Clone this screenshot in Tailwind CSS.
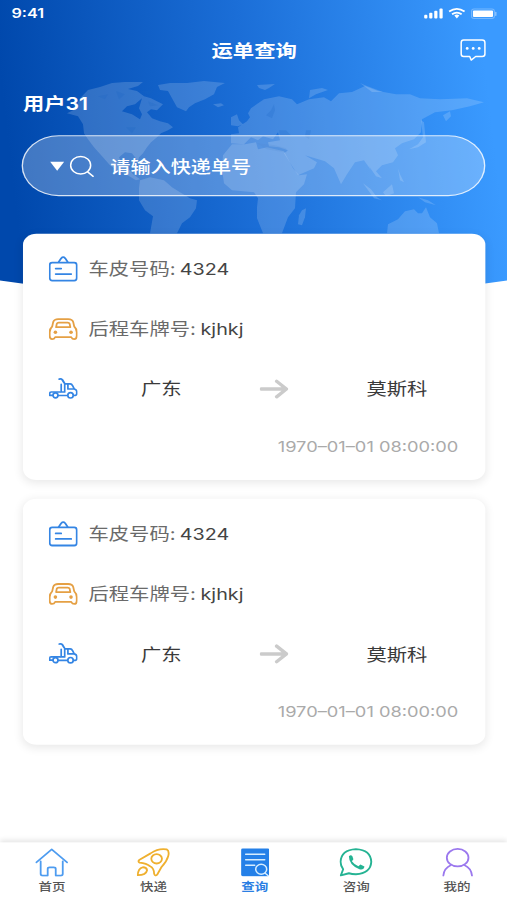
<!DOCTYPE html>
<html lang="zh-CN">
<head>
<meta charset="utf-8">
<title>运单查询</title>
<script src="https://cdn.jsdelivr.net/npm/@tailwindcss/browser@4"></script>
</head>
<body class="h-[900px] w-[507px] overflow-hidden bg-white">
<svg class="hidden">
  <symbol id="tag" viewBox="0 0 29 26" preserveAspectRatio="none"><g fill="none" stroke="#3485e4" stroke-width="1.800" stroke-linecap="round" stroke-linejoin="round"><rect x="1" y="6.500" width="27" height="18" rx="2.500"/><path d="M10 6 12.500 2.300Q14.500 0 16.500 2.300L19 6M7 12.500h5.500M7 18h15.500"/></g></symbol>
  <symbol id="car" viewBox="0 0 29 22" preserveAspectRatio="none"><g fill="none" stroke="#e5a044" stroke-width="1.800" stroke-linejoin="round"><path d="M9.500 1H19.500Q23.500 1 24.500 4L25.500 8.300Q28 10.500 28 14V17.500Q28 20.800 25.500 20.800 23.500 20.800 22.500 18.800H6.500Q5.500 20.800 3.500 20.800 1 20.800 1 17.500V14Q1 10.500 3.500 8.300L4.500 4Q5.500 1 9.500 1Z"/><path d="M10 4.500H19Q20.500 4.500 20.900 5.600L21.600 9H7.400L8.100 5.600Q8.500 4.500 10 4.500Z"/></g><circle cx="6.700" cy="14" r="1.800" fill="#e5a044"/><circle cx="22.300" cy="14" r="1.800" fill="#e5a044"/></symbol>
  <symbol id="truck" viewBox="0 0 29 21" preserveAspectRatio="none"><g fill="none" stroke="#3485e4" stroke-width="1.700" stroke-linecap="round" stroke-linejoin="round"><path d="M10.500 1.200Q12.500 .6 13.800 1.800L16 5.500V14H12.500V6.500M13.500 2 15.500 5"/><path d="M16.500 6H21.500Q23 6 24 8L25.500 11Q28 11.800 28 13.500V16Q28 17.500 25 17.500M19.200 6.500V11H25M11.500 14H2.500Q1 14 1 15.500V17.300H4M9.500 17.500H18.500"/><circle cx="6.800" cy="17.300" r="2.500"/><circle cx="21.800" cy="17.300" r="2.700"/></g></symbol>
  <symbol id="arrow" viewBox="0 0 29 20" preserveAspectRatio="none"><path d="M1.500 10H26M17 2.200 26.800 10 17 17.800" fill="none" stroke="#cbcbcb" stroke-width="3.400" stroke-linecap="round" stroke-linejoin="round"/></symbol>
</svg>
<div class="relative flex h-[812px] w-[375px] origin-top-left flex-col [transform:scale(1.352,1.10837)] font-['Inter','Noto_Sans_CJK_SC',sans-serif] text-[#3a3a3a]">

  <svg class="absolute left-0 top-0 -z-10 h-[262px] w-[375px]" viewBox="0 0 507 290" preserveAspectRatio="none">
    <defs>
      <linearGradient id="bg" gradientUnits="userSpaceOnUse" x1="10" y1="160" x2="490" y2="105"><stop offset="0" stop-color="#0048ac"/><stop offset=".5" stop-color="#1b6ed7"/><stop offset="1" stop-color="#3a9aff"/></linearGradient>
    </defs>
    <path d="M0 0H507V280Q254 318 0 280Z" fill="url(#bg)"/>
    <g fill="#fff" fill-opacity=".16">
      <path d="M81 97 88 90 100 87 112 83 125 82 143 82 138 86 128 89 137 91 144 96 151 98 163 104 157 110 151 109 147 112 152 118 160 121 168 123 173 127 168 130 161 133 157 137 151 142 147 147 143 153 139 157 138 161 132 153 125 152 119 157 122 164 128 168 133 174 140 179 136 180 126 174 117 170 110 165 103 157 94 147 88 139 84 133 83 124 78 116 67 113 75 109 78 102ZM122 111 127 106 135 104 142 98 139 108 142 114 140 119 132 114Z" fill-rule="evenodd"/>
      <path d="M158 85 170 83 187 83 204 81 225 83 217 87 214 94 205 99 195 103 189 107 186 111 177 107 172 98 168 91 160 90Z"/>
      <path d="M213 104 221 103 224 105 218 107Z"/>
      <path d="M140 180 150 177 164 180 172 187 180 192 190 198 197 200 196 208 190 217 182 223 177 233H150L153 216 145 210 139 200 139 188Z"/>
      <path d="M257 85 275 84 269 88 265 90 259 88Z"/>
      <path d="M231 117 237 114 239 120 243 124 238 126 231 125Z"/>
      <path d="M231 143 231 134 239 133 238 127 247 121 250 117 248 113 251 108 264 99 279 96 292 99 297 104 309 99 324 97 331 101 339 93 352 92 365 86 378 91 396 94 410 94 420 98 440 99 467 98 484 102 470 106 452 110 435 112 422 119 421 132 414 139 402 143 395 148 398 155 393 162 382 165 376 171 382 178 376 176 369 166 371 170 364 160 355 162 347 174 341 184 334 168 325 161 315 158 305 155 317 162 314 168 298 175 284 153 288 150 279 147 269 146 268 142 280 140 278 132 273 139 263 136 258 140 251 137 244 144Z"/>
      <path d="M310 90 322 88 328 90 316 94 309 98Z"/>
      <path d="M360 83 367 86 383 92 372 92Z"/>
      <path d="M232 144 245 144 256 142 258 149 267 147 284 151 293 168 299 175 307 174 304 184 296 192 295 208 288 217 282 233H263L257 218 257 207 258 198 254 192 243 191 232 190 224 183 222 169 223 155Z"/>
      <path d="M302 210 306 208 305 217 302 225 298 224 299 215Z"/>
      <path d="M387 233 388 224 398 219 405 211 414 209 418 213 422 213 426 207 430 217 437 223 439 233Z"/>
      <path d="M363 183 371 189 377 197 382 200 374 198ZM383 192 392 184 394 193 386 196ZM398 168 400 174 404 182 400 180ZM421 120 424 122 426 142 418 147 409 149 418 144 423 137ZM443 115 450 111 451 116 446 121ZM418 197 428 200 436 205 425 202Z"/>
    </g>
    <g fill="#1763c5" fill-opacity=".2"><path d="M257 143 275 145 286 148 287 152 278 151 267 149ZM279 130 286 130 291 135 280 135ZM306 130 311 130 309 139 305 136ZM98 96 108 94 105 99ZM116 91 125 94 119 99ZM140 91 154 90 149 95ZM148 101 158 105 150 106ZM126 127 136 127 132 133ZM266 115 271 110 274 104 275 110 272 118Z"/></g>
  </svg>

  <header class="h-[122px] shrink-0 text-white">
    <div class="flex h-6 items-center justify-between pr-[7px] pl-[8.500px]">
      <span class="text-[12px] font-semibold leading-none">9:41</span>
      <svg class="h-[11px] w-[55px]" viewBox="0 0 74 12" preserveAspectRatio="none">
        <g fill="#fff"><rect x="1" y="7" width="3.200" height="3.500" rx="1"/><rect x="6" y="5" width="3.200" height="5.500" rx="1"/><rect x="11" y="3" width="3.200" height="7.500" rx="1"/><rect x="16.200" y=".8" width="3.200" height="9.700" rx="1"/><path d="M31 7.500 33.500 10.500 36 7.500Q33.500 5.800 31 7.500Z"/><rect x="49.500" y="2.600" width="20" height="6.600" rx="1"/><rect x="71.500" y="4" width="1.500" height="4" rx=".7" opacity=".4"/></g>
        <g fill="none" stroke="#fff" stroke-width="1.800"><path d="M25.800 3.800Q33.500-1.600 41.200 3.800M28.700 6.500Q33.500 3 38.300 6.500"/><rect x="48.100" y="1.200" width="22.800" height="9.400" rx="2.500" opacity=".3" stroke-width="1"/></g>
      </svg>
    </div>
    <div class="relative flex h-[42px] items-center justify-center">
      <h1 class="pl-[1px] pt-[1px] text-[15.800px] font-bold leading-none">运单查询</h1>
      <svg class="absolute right-[15px] top-[11px] h-[21px] w-[20px]" viewBox="0 0 27 23" preserveAspectRatio="none"><path d="M4 1.200H22.500Q25.200 1.200 25.200 3.800V15Q25.200 17.500 22.500 17.500H16L11.500 21 10 17.500H4Q1.500 17.500 1.500 15V3.800Q1.500 1.200 4 1.200Z" fill="none" stroke="#fff" stroke-width="1.500" stroke-linejoin="round"/><g fill="#fff"><circle cx="7.500" cy="9.500" r="1.400"/><circle cx="13.500" cy="9.500" r="1.400"/><circle cx="19.500" cy="9.500" r="1.400"/></g></svg>
    </div>
    <div class="flex h-[56px] items-center pl-[17px] text-[15.700px] font-semibold leading-none">用户31</div>
  </header>

  <div class="mx-[16.400px] flex h-[55px] shrink-0 items-center rounded-full border border-white/80 bg-white/25 pl-[18.500px] text-white">
    <svg class="h-[20px] w-[34px]" viewBox="0 0 46 22" preserveAspectRatio="none"><path d="M1.500 6.500H15.500L8.500 15.500Z" fill="#fff"/><g fill="none" stroke="#fff" stroke-width="1.500" stroke-linecap="round"><ellipse cx="32" cy="10" rx="10" ry="8.800"/><path d="M39 16.500 44.500 21"/></g></svg>
    <span class="ml-[11.700px] pt-[3px] text-[14.900px] font-medium leading-none">请输入快递单号</span>
  </div>

  <main class="mt-[34px] flex grow flex-col gap-[17px] px-[16.500px]">
    <section class="h-[222px] shrink-0 rounded-[10px] bg-white px-[19.500px] pt-[5px] shadow-[0_2px_8px_rgba(0,0,0,0.09)]">
      <div class="flex h-[54px] items-center gap-[8px]"><svg class="h-[23.500px] w-[21.500px]"><use href="#tag"/></svg><p class="text-[15px] leading-none text-[#6a6a6a]">车皮号码:<span class="ml-[3.200px] text-[14.600px] text-[#444]">4324</span></p></div>
      <div class="flex h-[54px] items-center gap-[8px]"><svg class="-mt-[1px] h-[20px] w-[21.500px]"><use href="#car"/></svg><p class="text-[15px] leading-none text-[#6a6a6a]">后程车牌号:<span class="ml-[3.500px] text-[14.600px] text-[#444]">kjhkj</span></p></div>
      <div class="flex h-[54px] items-center text-[15px] leading-none"><svg class="-mt-[1px] h-[19px] w-[21.500px] shrink-0"><use href="#truck"/></svg><span class="-mt-[1px] w-[123.500px] shrink-0 text-center">广东</span><svg class="ml-[11px] h-[18px] w-[21.500px] shrink-0"><use href="#arrow"/></svg><span class="-mt-[1px] ml-[57.500px] shrink-0">莫斯科</span></div>
      <p class="flex h-[51.500px] items-center justify-end text-[13.500px] leading-none text-[#aaa]">1970–01–01 08:00:00</p>
    </section>
    <section class="h-[222px] shrink-0 rounded-[10px] bg-white px-[19.500px] pt-[5px] shadow-[0_2px_8px_rgba(0,0,0,0.09)]">
      <div class="flex h-[54px] items-center gap-[8px]"><svg class="h-[23.500px] w-[21.500px]"><use href="#tag"/></svg><p class="text-[15px] leading-none text-[#6a6a6a]">车皮号码:<span class="ml-[3.200px] text-[14.600px] text-[#444]">4324</span></p></div>
      <div class="flex h-[54px] items-center gap-[8px]"><svg class="-mt-[1px] h-[20px] w-[21.500px]"><use href="#car"/></svg><p class="text-[15px] leading-none text-[#6a6a6a]">后程车牌号:<span class="ml-[3.500px] text-[14.600px] text-[#444]">kjhkj</span></p></div>
      <div class="flex h-[54px] items-center text-[15px] leading-none"><svg class="-mt-[1px] h-[19px] w-[21.500px] shrink-0"><use href="#truck"/></svg><span class="w-[123.500px] shrink-0 text-center">广东</span><svg class="ml-[11px] h-[18px] w-[21.500px] shrink-0"><use href="#arrow"/></svg><span class="ml-[57.500px] shrink-0">莫斯科</span></div>
      <p class="flex h-[51.500px] items-center justify-end text-[13.500px] leading-none text-[#aaa]">1970–01–01 08:00:00</p>
    </section>
  </main>

  <nav class="grid h-[52px] shrink-0 grid-cols-5 bg-white pt-[5px] text-center text-[10px] font-medium leading-none text-[#555] shadow-[0_-2px_4px_rgba(0,0,0,0.1)]">
    <div class="flex flex-col items-center gap-[4px] pl-[2px]"><svg class="h-[26px] w-[24.500px]" viewBox="0 0 33 29" preserveAspectRatio="none"><path d="M1.200 14.500 16.500 1.500 31.800 14.500M5.500 13.500V26Q5.500 27.800 7.500 27.800H12.500V21Q12.500 19.500 14.500 19.500H18.500Q20.500 19.500 20.500 21V27.800H25.500Q27.500 27.800 27.500 26V13.500" fill="none" stroke="#4e9cf0" stroke-width="1.800" stroke-linecap="round" stroke-linejoin="round"/></svg><span>首页</span></div>
    <div class="flex flex-col items-center gap-[4px] pl-[2px]"><svg class="h-[26px] w-[24.500px]" viewBox="0 0 33 29" preserveAspectRatio="none"><g fill="none" stroke="#efb02f" stroke-width="1.800" stroke-linejoin="round"><path d="M14 5.500Q22 0 30 1.500Q33 3 31.500 8.500 30 14 25 19L20.500 27Q18.500 29 17.500 26 17.500 20.500 13.500 18.500 10 15.500 3 14.800 .8 13.500 3 12Z"/><ellipse cx="20" cy="11" rx="5.300" ry="4.700"/><path d="M1.200 27.500Q1.500 20.500 6 19.500 10 19.300 10.500 22.500 9.500 27.500 1.200 27.500Z"/></g></svg><span>快递</span></div>
    <div class="flex flex-col items-center gap-[4px] pl-[2px] font-bold text-[#2b7fe3]"><svg class="h-[26px] w-[21.500px]" viewBox="0 0 29 29" preserveAspectRatio="none"><rect x=".5" y=".5" width="28" height="28" rx="1.500" fill="#2480e8"/><g fill="none" stroke="#d6edff" stroke-width="1.500" stroke-linecap="round"><path d="M5 6.500H24M5 12H24M5 17.500H14"/><ellipse cx="20.500" cy="21.500" rx="5.500" ry="5"/><path d="M24.500 25.500 27.500 28"/></g></svg><span>查询</span></div>
    <div class="flex flex-col items-center gap-[4px] pl-[2px]"><svg class="h-[26px] w-[24.500px]" viewBox="0 0 33 29" preserveAspectRatio="none"><path d="M1.500 27.700 3.800 21.500Q1.200 18 1.200 14 1.800 2 16.500 1.200 31.300 2 31.800 14 31.200 25.700 16.500 26.500 12.500 26.500 9.500 25.500Z" fill="none" stroke="#25b393" stroke-width="1.900" stroke-linejoin="round"/><path d="M9.500 8.500Q11.500 6.500 13 8.500L14 11.500 12.500 13.500Q15 17 19 18.500L21 16.800 25 18.800Q24.500 22.500 20 21.500 9.500 17.500 9.500 8.500Z" fill="#25b393"/></svg><span>咨询</span></div>
    <div class="flex flex-col items-center gap-[4px] pl-[1px]"><svg class="h-[26px] w-[23px]" viewBox="0 0 31 29" preserveAspectRatio="none"><g fill="none" stroke="#9b78ee" stroke-width="1.800" stroke-linecap="round"><ellipse cx="15.500" cy="9.800" rx="10.800" ry="8.800"/><path d="M1.200 27.800Q2 20.500 8.500 17.500M22.500 17.500Q29 20.500 29.800 27.800"/></g></svg><span>我的</span></div>
  </nav>
</div>
</body>
</html>
